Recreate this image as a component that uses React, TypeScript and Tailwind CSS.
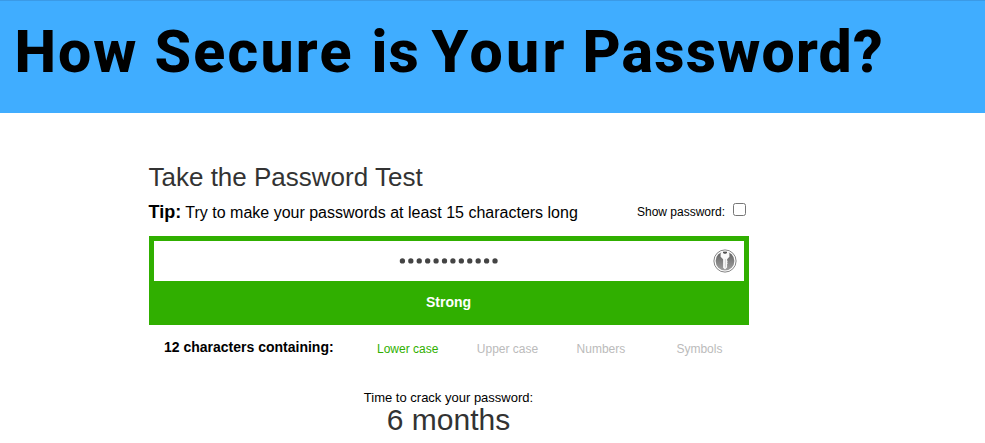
import React from "react";

function KeyIcon() {
  return (
    <svg width="24" height="24" viewBox="0 0 24 24" className="shrink-0" aria-hidden="true">
      <defs>
        <linearGradient id="disc" x1="0" y1="0" x2="0" y2="1">
          <stop offset="0" stopColor="#606060" />
          <stop offset="1" stopColor="#a0a0a0" />
        </linearGradient>
      </defs>
      <circle cx="12" cy="12" r="11.1" fill="#fff" stroke="#777" strokeWidth="0.9" />
      <circle cx="12" cy="12" r="9.4" fill="url(#disc)" />
      <path
        d="M8.6 2.4h6.8l1 2.1v3.2l-2.3 2.5v1.3l.6.8-.6.9.6 1-.6 1v3.4L12 20.4l-1.9-1.7v-8.5L7.6 7.7V4.5z"
        fill="#f8f8f8"
      />
      <path d="M10 2.8h4v1.1l-1.3.9h-1.4l-1.3-.9z" fill="#505050" />
      <path d="M12.4 10v8.5" stroke="#c4c4c4" strokeWidth="0.7" />
    </svg>
  );
}

function MaskDots({ count }: { count: number }) {
  return (
    <svg width="100" height="8" viewBox="0 0 100 8" aria-hidden="true">
      {Array.from({ length: count }, (_, i) => (
        <circle key={i} cx={3.4 + i * 8.42} cy="3.9" r="2.65" fill="#444" />
      ))}
    </svg>
  );
}

const kinds = [
  { label: "Lower case", on: true },
  { label: "Upper case", on: false },
  { label: "Numbers", on: false },
  { label: "Symbols", on: false },
];

export default function App() {
  return (
    <div className="h-[443px] w-[985px] overflow-hidden bg-white font-['Liberation_Sans',Arial,sans-serif] text-black">
      <header className="h-[113px] border-t border-[#3b9ae6] bg-[#40adff] pt-4 pl-[14.5px]">
        <h1 className="flex font-['Roboto',sans-serif] text-[59px] leading-[70px] font-extrabold whitespace-nowrap">
          <span className="w-[140px] shrink-0 tracking-[2px]">How</span>
          <span className="w-[217px] shrink-0 tracking-[2.2px]">Secure</span>
          <span className="w-[60px] shrink-0 tracking-[1px]">is</span>
          <span className="w-[151px] shrink-0 tracking-[3.2px]">Your</span>
          <span className="tracking-[1.2px]">Password?</span>
        </h1>
      </header>
      <main className="ml-[148.5px] w-[600px] pt-[49px]">
        <h2 className="text-[26px] leading-[30px] text-[#333]">Take the Password Test</h2>
        <div className="flex h-[44px] justify-between pr-[2.5px]">
          <p className="pt-[9px] text-[16px] leading-[22px]">
            <b className="text-[18px]">Tip:</b> Try to make your passwords at least 15 characters long
          </p>
          <label className="flex pt-[11px] text-[12px] leading-4">
            <span className="pt-px">Show password:</span>
            <input
              type="checkbox"
              className="ml-2 h-[13px] w-[13px] appearance-none rounded-[2.5px] border border-[#767676] bg-white"
            />
          </label>
        </div>
        <section className="ml-[0.5px] h-[89px] w-[600px] bg-[#30af00] p-[5px]">
          <div className="flex h-10 items-center justify-end bg-white pr-[7px]">
            <div className="flex flex-1 justify-center pb-px pl-[31px]">
              <MaskDots count={12} />
            </div>
            <KeyIcon />
          </div>
          <p className="pt-[11px] pr-px text-center text-[14px] leading-5 font-bold text-white">Strong</p>
        </section>
        <div className="flex pt-3 pl-[15.5px]">
          <b className="w-[213px] shrink-0 text-[14px] leading-5">12 characters containing:</b>
          {kinds.map((k) => (
            <span
              key={k.label}
              className={`w-[99.8px] shrink-0 pt-[2px] text-[12px] leading-5 ${k.on ? "text-[#30af00]" : "text-[#bbb]"}`}
            >
              {k.label}
            </span>
          ))}
        </div>
        <div className="pt-[31px] text-center">
          <p className="text-[13px] leading-4">Time to crack your password:</p>
          <p className="text-[30px] leading-[28px] text-[#333]">6 months</p>
        </div>
      </main>
    </div>
  );
}
